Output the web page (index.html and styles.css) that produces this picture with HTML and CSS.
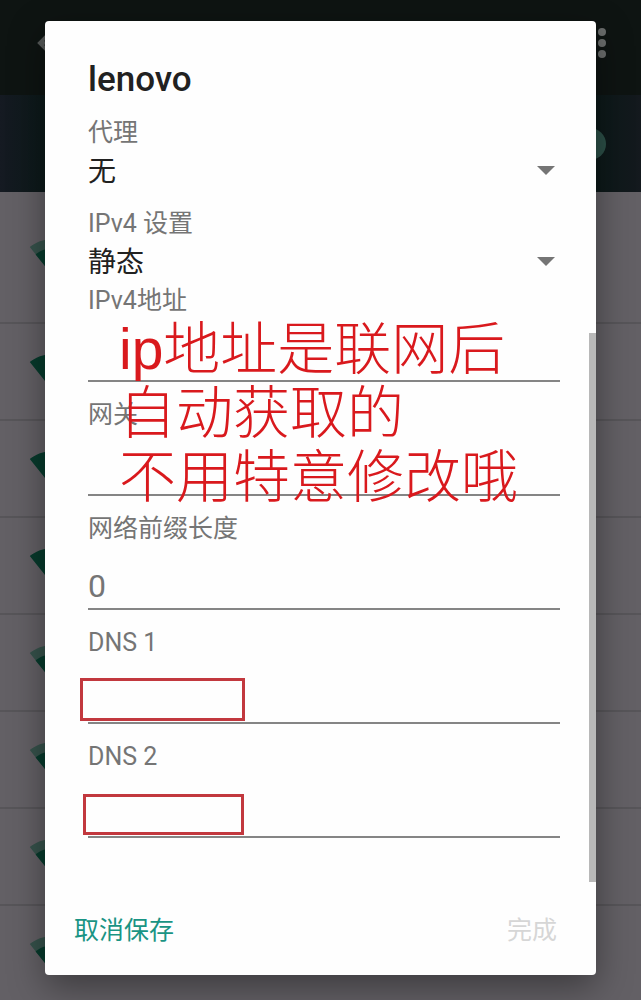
FILE: index.html
```html
<!DOCTYPE html>
<html lang="zh-CN">
<head>
  <meta charset="UTF-8">
  <meta name="viewport" content="width=device-width, initial-scale=1.0">
  <title>WLAN</title>
  <link rel="stylesheet" href="styles.css">
</head>
<body>

<svg class="sprite" aria-hidden="true">
  <symbol id="wifi-full" viewBox="0 0 24 24">
    <path fill="#073a2c" d="M12 21.5L23.6 7C23.2 6.700 18.700 3 12 3S.8 6.700.4 7z"/>
  </symbol>
  <symbol id="wifi-weak" viewBox="0 0 24 24">
    <path fill="#36524b" d="M12 21.5L23.6 7C23.2 6.700 18.700 3 12 3S.8 6.700.4 7z"/>
    <path fill="#073a2c" d="M12 21.500L20.700 10.700C20.300 10.400 17.100 7.600 12 7.600S3.700 10.400 3.300 10.700z"/>
  </symbol>
</svg>

<div class="screen">
  <!-- Dimmed network list -->
  <div class="app-bar">
    <svg class="back" viewBox="0 0 24 24"><path fill="none" stroke="#555958" stroke-width="3" d="M13 3L4 12l9 9M4 12h18"/></svg>
    <svg class="more" viewBox="0 0 8 30"><g fill="#6b6e6d"><circle cx="4" cy="4" r="4"/><circle cx="4" cy="15" r="4"/><circle cx="4" cy="26" r="4"/></g></svg>
  </div>
  <div class="switch-bar"><span class="thumb"></span></div>
  <div class="networks">
    <div class="network first"><svg><use href="#wifi-weak"/></svg></div>
    <div class="network"><svg><use href="#wifi-full"/></svg></div>
    <div class="network"><svg><use href="#wifi-full"/></svg></div>
    <div class="network"><svg><use href="#wifi-full"/></svg></div>
    <div class="network"><svg><use href="#wifi-weak"/></svg></div>
    <div class="network"><svg><use href="#wifi-weak"/></svg></div>
    <div class="network"><svg><use href="#wifi-weak"/></svg></div>
    <div class="network"><svg><use href="#wifi-weak"/></svg></div>
  </div>

  <!-- Dialog -->
  <div class="overlay">
    <form class="dialog">
      <h2>lenovo</h2>

      <div class="select-field">
        <label for="proxy">代理</label>
        <div class="select-box">
          <select id="proxy"><option>无</option></select>
        </div>
      </div>

      <div class="select-field">
        <label for="ipSettings">IPv4 设置</label>
        <div class="select-box">
          <select id="ipSettings"><option>静态</option></select>
        </div>
      </div>

      <div class="fields">
        <div class="field">
          <label for="ipAddress">IPv4地址</label>
          <input type="text" id="ipAddress">
        </div>
        <div class="field">
          <label for="gateway">网关</label>
          <input type="text" id="gateway">
        </div>
        <div class="field">
          <label for="prefix">网络前缀长度</label>
          <input type="text" id="prefix" value="0">
        </div>
        <div class="field">
          <label for="dns1">DNS 1</label>
          <input type="text" id="dns1">
          <span class="mark mark-dns1"></span>
        </div>
        <div class="field">
          <label for="dns2">DNS 2</label>
          <input type="text" id="dns2">
          <span class="mark mark-dns2"></span>
        </div>
        <p class="note">ip地址是联网后<br>自动获取的<br>不用特意修改哦</p>
      </div>

      <div class="actions">
        <button type="button" class="btn">取消保存</button>
        <button type="button" class="btn" disabled>完成</button>
      </div>
      <span class="scrollbar"></span>
    </form>
  </div>
</div>

</body>
</html>
```
FILE: styles.css
```css
* { box-sizing: border-box; }
body { margin: 0; font-family: Roboto, "Noto Sans CJK SC", sans-serif; color: #212121; }
.sprite { display: none; }
.screen { position: relative; height: 100vh; min-height: 1000px; overflow: hidden; display: flex; flex-direction: column; background: #636065; }

/* Background page */
.app-bar { flex: none; height: 95px; padding: 0 35px; display: flex; justify-content: space-between; align-items: center; background: #0e1412; }
.app-bar svg { margin-bottom: 9px; }
.back { width: 28px; height: 28px; }
.more { width: 8px; height: 30px; }
.switch-bar { flex: none; height: 97px; padding: 0 35px; display: flex; justify-content: flex-end; align-items: center; background: linear-gradient(90deg, #151a22, #0b1918 8%, #0b1918 92%, #14191e); }
.thumb { width: 32px; height: 32px; border-radius: 50%; background: #2c4f47; }
.networks { flex: 1; }
.network { height: 97px; padding-left: 29px; display: flex; align-items: center; border-bottom: 2px solid #575559; }
.network.first { height: 132px; }
.network svg { width: 48px; height: 48px; }

/* Dialog */
.overlay { position: absolute; inset: 0; padding: 21px 45px 25px; display: flex; }
.dialog { position: relative; flex: 1; padding: 38px 36px 26px 43px; display: flex; flex-direction: column; background: #fefefe; border-radius: 4px; box-shadow: 0 12px 36px rgba(0, 0, 0, 0.4); }
h2 { margin: 0 0 17px; font-size: 35px; line-height: 42px; font-weight: 500; }
label { display: block; font-size: 25px; line-height: 30px; color: #757575; }
.select-field { margin-bottom: 15px; }
.select-field + .fields { margin-top: -14px; }
.select-box { position: relative; }
.select-box::after { content: ""; position: absolute; right: 5px; top: 18px; border: 9px solid transparent; border-top-color: #757575; border-bottom: 0; pointer-events: none; }
select { display: block; width: 100%; height: 46px; padding: 0; border: 0; background: none; appearance: none; font-family: inherit; font-size: 28px; color: #212121; }

.fields { position: relative; display: flex; flex-direction: column; gap: 18px; }
.field { position: relative; }
input { display: block; width: 100%; height: 66px; padding: 20px 0 0; border: 0; border-bottom: 2px solid #858585; border-radius: 0; background: none; outline: none; font-family: inherit; font-size: 32px; color: #757575; }

/* Red annotations */
.note { position: absolute; left: 31px; top: 31px; margin: 0; font-family: "Liberation Sans", "Noto Sans CJK SC", sans-serif; font-size: 57px; line-height: 64px; font-weight: 300; color: #d9191d; white-space: nowrap; pointer-events: none; }
.mark { position: absolute; border: 3px solid #c2383e; pointer-events: none; }
.mark-dns1 { left: -8px; bottom: 3px; width: 165px; height: 43px; }
.mark-dns2 { left: -5px; bottom: 3px; width: 161px; height: 41px; }

.actions { margin: auto 0 0 -14px; display: flex; justify-content: space-between; }
.btn { height: 42px; padding: 0; border: 0; background: none; font-family: inherit; font-size: 25px; color: #1a9484; cursor: pointer; }
.btn:disabled { margin-right: 3px; color: #d6d6d6; cursor: default; }
.scrollbar { position: absolute; right: 0; top: 312px; bottom: 93px; width: 7px; background: #b8b8b8; }
```
